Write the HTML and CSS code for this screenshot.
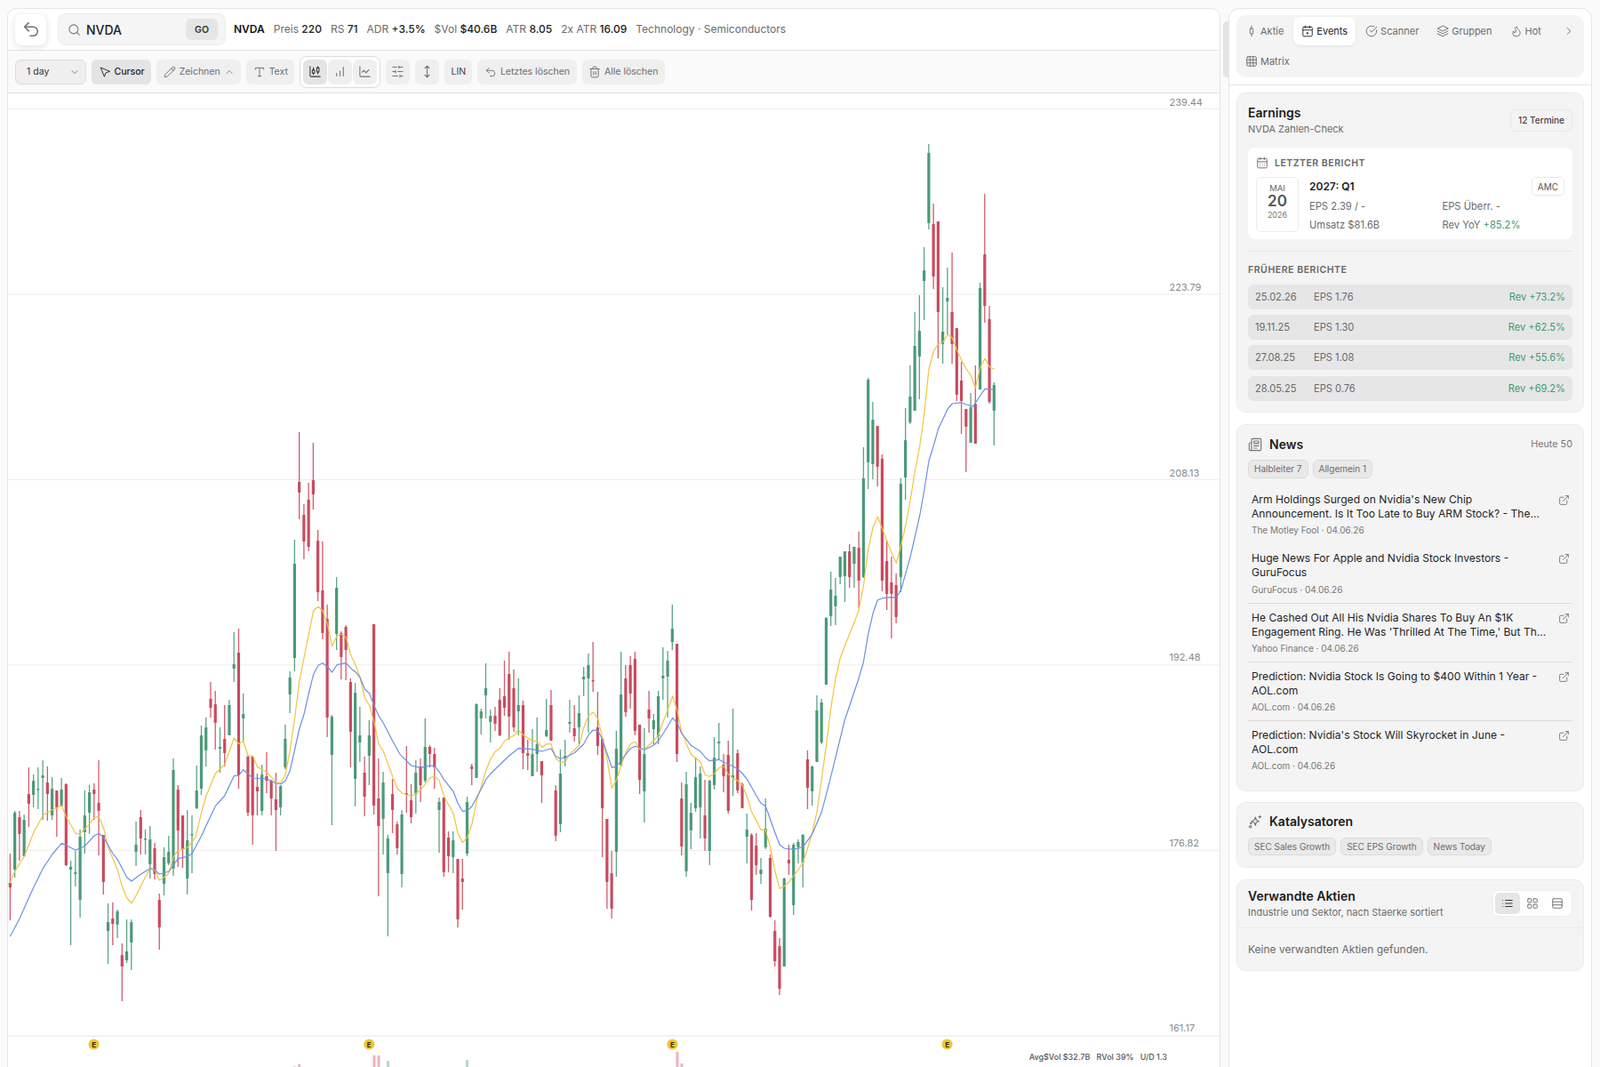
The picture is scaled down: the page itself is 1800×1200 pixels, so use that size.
FILE: index.html
```html
<!DOCTYPE html>
<html lang="de">
<head>
    <meta charset="UTF-8">
    <title>NVDA - Chart</title>
    <link rel="stylesheet" href="styles.css">
</head>
<body>
<div class="app">
    <!-- Chart -->
    <main class="chart-panel">
        <header class="ticker-bar">
            <button class="back-btn">
                <svg class="icon" width="22" height="22" viewBox="0 0 24 24"><path d="M9 14 4 9l5-5"/><path d="M4 9h10.5a5.5 5.5 0 0 1 0 11H11"/></svg>
            </button>
            <form class="search-box">
                <svg class="icon" width="15" height="15" viewBox="0 0 24 24"><circle cx="11" cy="11" r="8"/><path d="m21 21-4.3-4.3"/></svg>
                <span class="search-value">NVDA</span>
                <span class="go-btn">GO</span>
            </form>
            <div class="stats">
                <strong>NVDA</strong>
                <span>Preis <b>220</b></span>
                <span>RS <b>71</b></span>
                <span>ADR <b>+3.5%</b></span>
                <span>$Vol <b>$40.6B</b></span>
                <span>ATR <b>8.05</b></span>
                <span>2x ATR <b>16.09</b></span>
                <span>Technology · Semiconductors</span>
            </div>
        </header>

        <div class="toolbar">
            <div class="tool select-tool">1 day
                <svg class="icon" width="12" height="12" viewBox="0 0 24 24"><path d="m6 9 6 6 6-6"/></svg>
            </div>
            <button class="tool tool-active">
                <svg class="icon icon-dark" width="14" height="14" viewBox="0 0 24 24"><path d="m4 4 7.07 17 2.51-7.39L21 11.07z"/></svg>Cursor
            </button>
            <button class="tool">
                <svg class="icon" width="14" height="14" viewBox="0 0 24 24"><path d="M21.174 6.812a1 1 0 0 0-3.986-3.987L3.842 16.174a2 2 0 0 0-.5.83l-1.321 4.352a.5.5 0 0 0 .623.622l4.353-1.32a2 2 0 0 0 .83-.497z"/><path d="m15 5 4 4"/></svg>Zeichnen
                <svg class="icon" width="12" height="12" viewBox="0 0 24 24"><path d="m18 15-6-6-6 6"/></svg>
            </button>
            <button class="tool">
                <svg class="icon" width="14" height="14" viewBox="0 0 24 24"><path d="M4 7V4h16v3"/><path d="M9 20h6"/><path d="M12 4v16"/></svg>Text
            </button>
            <div class="tool-group">
                <button class="tool tool-icon tool-active">
                    <svg class="icon icon-dark" width="15" height="15" viewBox="0 0 24 24"><path d="M9 5v4"/><rect x="7" y="9" width="4" height="6" rx="1"/><path d="M9 15v2"/><path d="M17 3v2"/><rect x="15" y="5" width="4" height="8" rx="1"/><path d="M17 13v3"/><path d="M3 3v16a2 2 0 0 0 2 2h16"/></svg>
                </button>
                <button class="tool tool-icon">
                    <svg class="icon" width="15" height="15" viewBox="0 0 24 24"><path d="M18 20V4"/><path d="M12 20v-9"/><path d="M6 20v-5"/></svg>
                </button>
                <button class="tool tool-icon">
                    <svg class="icon" width="15" height="15" viewBox="0 0 24 24"><path d="M3 3v16a2 2 0 0 0 2 2h16"/><path d="m19 9-5 5-4-4-3 3"/></svg>
                </button>
            </div>
            <button class="tool tool-icon">
                <svg class="icon" width="15" height="15" viewBox="0 0 24 24"><path d="M21 4h-7M10 4H3M21 12h-9M8 12H3M21 20h-5M12 20H3M14 2v4M8 10v4M16 18v4"/></svg>
            </button>
            <button class="tool tool-icon">
                <svg class="icon" width="15" height="15" viewBox="0 0 24 24"><path d="M12 2v20"/><path d="m8 18 4 4 4-4"/><path d="m8 6 4-4 4 4"/></svg>
            </button>
            <button class="tool tool-lin">LIN</button>
            <button class="tool">
                <svg class="icon" width="14" height="14" viewBox="0 0 24 24"><path d="M9 14 4 9l5-5"/><path d="M4 9h10.5a5.5 5.5 0 0 1 0 11H11"/></svg>Letztes löschen
            </button>
            <button class="tool">
                <svg class="icon" width="14" height="14" viewBox="0 0 24 24"><path d="M3 6h18"/><path d="M19 6v14c0 1-1 2-2 2H7c-1 0-2-1-2-2V6"/><path d="M8 6V4c0-1 1-2 2-2h4c1 0 2 1 2 2v2"/><path d="M10 11v6"/><path d="M14 11v6"/></svg>Alle löschen
            </button>
        </div>

        <div class="chart-area" id="chart"></div>
    </main>

    <div class="scroll-rail"><div class="scroll-thumb"></div></div>

    <!-- Seitenleiste -->
    <aside class="side-panel">
        <nav class="tabs">
            <button class="tab">
                <svg class="icon" width="14" height="14" viewBox="0 0 24 24"><path d="M12 2v5"/><rect x="9" y="7" width="6" height="10" rx="1"/><path d="M12 17v5"/></svg>Aktie
            </button>
            <button class="tab tab-active">
                <svg class="icon" width="14" height="14" viewBox="0 0 24 24"><rect x="3" y="4" width="18" height="18" rx="2"/><path d="M16 2v4"/><path d="M8 2v4"/><path d="M3 10h18"/><path d="M11 15h2v2h-2z"/></svg>Events
            </button>
            <button class="tab">
                <svg class="icon" width="14" height="14" viewBox="0 0 24 24"><path d="M21.8 10A10 10 0 1 1 17 3.3"/><path d="m9 11 3 3L22 4"/></svg>Scanner
            </button>
            <button class="tab">
                <svg class="icon" width="14" height="14" viewBox="0 0 24 24"><path d="M12 2 2 7l10 5 10-5z"/><path d="m2 17 10 5 10-5"/><path d="m2 12 10 5 10-5"/></svg>Gruppen
            </button>
            <button class="tab">
                <svg class="icon" width="14" height="14" viewBox="0 0 24 24"><path d="M8.5 14.500A2.500 2.500 0 0 0 11 12c0-1.380-.5-2-1-3-1.070-2.140-.22-4.050 2-6 .5 2.500 2 4.900 4 6.500 2 1.600 3 3.500 3 5.500a7 7 0 1 1-14 0c0-1.150.43-2.290 1-3a2.500 2.500 0 0 0 2.500 2.500z"/></svg>Hot
            </button>
            <button class="tab tab-more">
                <svg class="icon" width="14" height="14" viewBox="0 0 24 24"><path d="m9 18 6-6-6-6"/></svg>
            </button>
            <button class="tab">
                <svg class="icon" width="14" height="14" viewBox="0 0 24 24"><rect x="3" y="3" width="18" height="18" rx="2"/><path d="M3 9h18"/><path d="M3 15h18"/><path d="M9 3v18"/><path d="M15 3v18"/></svg>Matrix
            </button>
        </nav>

        <div class="side-content">
            <!-- Earnings -->
            <section class="card earnings-card">
                <div class="card-head">
                    <div>
                        <h2>Earnings</h2>
                        <p class="card-sub">NVDA Zahlen-Check</p>
                    </div>
                    <span class="badge">12 Termine</span>
                </div>

                <div class="report">
                    <div class="report-label">
                        <svg class="icon" width="14" height="14" viewBox="0 0 24 24"><rect x="3" y="4" width="18" height="18" rx="2"/><path d="M16 2v4"/><path d="M8 2v4"/><path d="M3 10h18"/><path d="M8 14h.01M12 14h.01M16 14h.01M8 18h.01M12 18h.01M16 18h.01"/></svg>
                        LETZTER BERICHT
                    </div>
                    <div class="report-body">
                        <div class="date-box">
                            <span class="date-month">MAI</span>
                            <span class="date-day">20</span>
                            <span class="date-year">2026</span>
                        </div>
                        <div class="report-info">
                            <div class="report-title">
                                <strong>2027: Q1</strong>
                                <span class="amc">AMC</span>
                            </div>
                            <div class="report-grid">
                                <span>EPS 2.39 / -</span>
                                <span>EPS Überr. -</span>
                                <span>Umsatz $81.6B</span>
                                <span>Rev YoY <em class="up">+85.2%</em></span>
                            </div>
                        </div>
                    </div>
                </div>

                <h3 class="past-title">FRÜHERE BERICHTE</h3>
                <div class="past-row"><span class="past-date">25.02.26</span><span>EPS 1.76</span><span class="up past-rev">Rev +73.2%</span></div>
                <div class="past-row"><span class="past-date">19.11.25</span><span>EPS 1.30</span><span class="up past-rev">Rev +62.5%</span></div>
                <div class="past-row"><span class="past-date">27.08.25</span><span>EPS 1.08</span><span class="up past-rev">Rev +55.6%</span></div>
                <div class="past-row"><span class="past-date">28.05.25</span><span>EPS 0.76</span><span class="up past-rev">Rev +69.2%</span></div>
            </section>

            <!-- News -->
            <section class="card news-card">
                <div class="icon-head">
                    <svg class="icon" width="16" height="16" viewBox="0 0 24 24"><path d="M4 22h16a2 2 0 0 0 2-2V4a2 2 0 0 0-2-2H8a2 2 0 0 0-2 2v16a2 2 0 0 1-2 2Zm0 0a2 2 0 0 1-2-2v-9c0-1.1.9-2 2-2h2"/><path d="M18 14h-8"/><path d="M15 18h-5"/><path d="M10 6h8v4h-8V6Z"/></svg>
                    <h2>News</h2>
                    <span class="news-count">Heute 50</span>
                </div>
                <div class="pills">
                    <span class="pill">Halbleiter 7</span>
                    <span class="pill">Allgemein 1</span>
                </div>
                <article class="news-item news-item-plain">
                    <div>
                        <h4>Arm Holdings Surged on Nvidia's New Chip Announcement. Is It Too Late to Buy ARM Stock? - The...</h4>
                        <p>The Motley Fool · 04.06.26</p>
                    </div>
                    <svg class="icon" width="13" height="13" viewBox="0 0 24 24"><path d="M15 3h6v6"/><path d="M10 14 21 3"/><path d="M18 13v6a2 2 0 0 1-2 2H5a2 2 0 0 1-2-2V8a2 2 0 0 1 2-2h6"/></svg>
                </article>
                <article class="news-item">
                    <div>
                        <h4>Huge News For Apple and Nvidia Stock Investors - GuruFocus</h4>
                        <p>GuruFocus · 04.06.26</p>
                    </div>
                    <svg class="icon" width="13" height="13" viewBox="0 0 24 24"><path d="M15 3h6v6"/><path d="M10 14 21 3"/><path d="M18 13v6a2 2 0 0 1-2 2H5a2 2 0 0 1-2-2V8a2 2 0 0 1 2-2h6"/></svg>
                </article>
                <article class="news-item">
                    <div>
                        <h4>He Cashed Out All His Nvidia Shares To Buy An $1K Engagement Ring. He Was 'Thrilled At The Time,' But Th...</h4>
                        <p>Yahoo Finance · 04.06.26</p>
                    </div>
                    <svg class="icon" width="13" height="13" viewBox="0 0 24 24"><path d="M15 3h6v6"/><path d="M10 14 21 3"/><path d="M18 13v6a2 2 0 0 1-2 2H5a2 2 0 0 1-2-2V8a2 2 0 0 1 2-2h6"/></svg>
                </article>
                <article class="news-item">
                    <div>
                        <h4>Prediction: Nvidia Stock Is Going to $400 Within 1 Year - AOL.com</h4>
                        <p>AOL.com · 04.06.26</p>
                    </div>
                    <svg class="icon" width="13" height="13" viewBox="0 0 24 24"><path d="M15 3h6v6"/><path d="M10 14 21 3"/><path d="M18 13v6a2 2 0 0 1-2 2H5a2 2 0 0 1-2-2V8a2 2 0 0 1 2-2h6"/></svg>
                </article>
                <article class="news-item news-item-plain">
                    <div>
                        <h4>Prediction: Nvidia's Stock Will Skyrocket in June - AOL.com</h4>
                        <p>AOL.com · 04.06.26</p>
                    </div>
                    <svg class="icon" width="13" height="13" viewBox="0 0 24 24"><path d="M15 3h6v6"/><path d="M10 14 21 3"/><path d="M18 13v6a2 2 0 0 1-2 2H5a2 2 0 0 1-2-2V8a2 2 0 0 1 2-2h6"/></svg>
                </article>
            </section>

            <!-- Katalysatoren -->
            <section class="card catalyst-card">
                <div class="icon-head">
                    <svg class="icon" width="16" height="16" viewBox="0 0 24 24"><path d="M12.500 4.500l1.500 4.500 4.500 2.500-4.500 1.500-1.500 5.500-2-5-5-1.500 5-2.500z"/><path d="M20 2v4M18 4h4"/><circle cx="4" cy="20.500" r="1.800"/><circle cx="5" cy="15" r="1"/></svg>
                    <h2>Katalysatoren</h2>
                </div>
                <div class="pills">
                    <span class="pill">SEC Sales Growth</span>
                    <span class="pill">SEC EPS Growth</span>
                    <span class="pill">News Today</span>
                </div>
            </section>

            <!-- Verwandte Aktien -->
            <section class="card related-card">
                <div class="related-head">
                    <div>
                        <h2>Verwandte Aktien</h2>
                        <p class="card-sub">Industrie und Sektor, nach Staerke sortiert</p>
                    </div>
                    <div class="view-toggle">
                        <button class="view-btn view-active">
                            <svg class="icon icon-dark" width="14" height="14" viewBox="0 0 24 24"><path d="M3 6h.01M3 12h.01M3 18h.01M8 6h13M8 12h13M8 18h13"/></svg>
                        </button>
                        <button class="view-btn">
                            <svg class="icon" width="14" height="14" viewBox="0 0 24 24"><rect x="3" y="3" width="7" height="7" rx="1"/><rect x="14" y="3" width="7" height="7" rx="1"/><rect x="14" y="14" width="7" height="7" rx="1"/><rect x="3" y="14" width="7" height="7" rx="1"/></svg>
                        </button>
                        <button class="view-btn">
                            <svg class="icon" width="14" height="14" viewBox="0 0 24 24"><rect x="3" y="3" width="18" height="18" rx="2"/><path d="M3 9h18"/><path d="M3 15h18"/></svg>
                        </button>
                    </div>
                </div>
                <p class="related-empty">Keine verwandten Aktien gefunden.</p>
            </section>
        </div>
    </aside>
</div>
<script src="chart.js"></script>
</body>
</html>
```

FILE: styles.css
```css
:root {
    --border: #e5e5e5;
    --card: #f4f4f4;
    --muted: #6b6b6b;
    --text: #1c1c1c;
    --green: #3f9b73;
}

* {
    box-sizing: border-box;
}

html, body {
    height: 100%;
}

body {
    margin: 0;
    overflow: hidden;
    background: #fafafa;
    color: var(--text);
    font-family: "Inter", "Liberation Sans", sans-serif;
    font-size: 12px;
}

button {
    font: inherit;
    border: none;
    background: none;
    color: inherit;
    padding: 0;
}

h2, h3, h4, p {
    margin: 0;
}

.icon {
    flex-shrink: 0;
    fill: none;
    stroke: #737373;
    stroke-width: 1.7;
    stroke-linecap: round;
    stroke-linejoin: round;
}

.icon-dark {
    stroke: #333;
}

.app {
    display: flex;
    padding: 9px 9px 0 8px;
    height: 1300px;
}

/* Chart */
.chart-panel {
    width: 1365px;
    display: flex;
    flex-direction: column;
    background: #fff;
    border: 1px solid var(--border);
    border-radius: 10px 10px 0 0;
    overflow: hidden;
}

.ticker-bar {
    height: 47px;
    flex-shrink: 0;
    display: flex;
    align-items: center;
    padding: 0 8px;
    border-bottom: 1px solid var(--border);
}

.back-btn {
    width: 35px;
    height: 35px;
    display: flex;
    align-items: center;
    justify-content: center;
    border-radius: 8px;
    background: #fff;
    box-shadow: 0 2px 8px rgba(0,0,0,0.12);
}

.search-box {
    width: 189px;
    height: 36px;
    margin-left: 13px;
    display: flex;
    align-items: center;
    gap: 6px;
    padding: 0 8px 0 10px;
    background: #f5f5f5;
    border: 1px solid #ececec;
    border-radius: 8px;
}

.search-value {
    flex: 1;
    font-size: 14px;
    font-weight: 500;
}

.go-btn {
    width: 36px;
    height: 24px;
    display: flex;
    align-items: center;
    justify-content: center;
    border-radius: 6px;
    background: #e5e5e5;
    font-size: 10.5px;
    font-weight: 600;
    color: #333;
}

.stats {
    display: flex;
    gap: 10px;
    margin: 0 0 1px 9px;
    font-size: 12px;
    color: var(--muted);
    white-space: nowrap;
}

.stats strong {
    color: #111;
    font-weight: 600;
}

.stats b {
    color: #222;
    font-weight: 500;
}

.toolbar {
    height: 48px;
    flex-shrink: 0;
    display: flex;
    align-items: center;
    padding: 0 8px;
    gap: 6px;
    background: #fafafa;
    border-bottom: 1px solid #e2e2e2;
}

.tool {
    height: 28px;
    display: flex;
    align-items: center;
    gap: 4px;
    padding: 0 7.500px;
    border-radius: 6px;
    background: #efefef;
    font-size: 10.5px;
    font-weight: 400;
    color: #6b6b6b;
    white-space: nowrap;
}

.tool-active {
    background: #e4e4e4;
    color: #222;
    font-weight: 500;
}

.select-tool {
    width: 80px;
    justify-content: space-between;
    padding: 0 6px 0 12px;
    border: 1px solid #dedede;
    color: #333;
}

.tool-group {
    display: flex;
    gap: 1px;
    padding: 3px;
    background: #fff;
    border: 1px solid #dcdcdc;
    border-radius: 8px;
}

.tool-icon {
    width: 27px;
    justify-content: center;
    padding: 0;
}

.tool-lin {
    width: 31px;
    justify-content: center;
    padding: 0;
    color: #444;
}

.chart-area {
    flex: 1;
    position: relative;
}

.chart-area svg {
    display: block;
}

.scroll-rail {
    width: 9px;
    flex-shrink: 0;
    padding: 15px 0 0 3px;
}

.scroll-thumb {
    width: 9px;
    height: 63px;
    border-radius: 5px;
    background: #e4e4e4;
}

/* Seitenleiste */
.side-panel {
    width: 409px;
    background: #fff;
    border: 1px solid var(--border);
    border-radius: 12px 12px 0 0;
}

.tabs {
    display: flex;
    flex-wrap: wrap;
    gap: 2px;
    margin: 7px 8px 0;
    padding: 2px 1px;
    height: 70px;
    background: var(--card);
    border-radius: 10px;
}

.tab {
    height: 32px;
    display: flex;
    align-items: center;
    gap: 3px;
    padding: 0 9px;
    border-radius: 8px;
    font-size: 11px;
    font-weight: 400;
    color: #6b6b6b;
}

.tab-active {
    background: #fff;
    color: #222;
    box-shadow: 0 1px 3px rgba(0,0,0,0.08);
}

.tab-active .icon {
    stroke: #333;
}

.tab-more {
    width: 32px;
    margin-left: auto;
    justify-content: center;
    padding: 0;
}

.side-content {
    display: flex;
    flex-direction: column;
    gap: 12.500px;
    margin-top: 8px;
    padding: 8px 8px 0;
    border-top: 1px solid var(--border);
}

.card {
    background: var(--card);
    border: 1px solid #ebebeb;
    border-radius: 10px;
    padding: 10px 12px;
}

.card h2 {
    font-size: 14px;
    font-weight: 600;
    line-height: 20px;
    color: #1c1c1c;
}

.card-sub {
    font-size: 11px;
    line-height: 16px;
    color: var(--muted);
}

.up {
    color: var(--green);
    font-style: normal;
}

/* Earnings */
.earnings-card {
    height: 360px;
    padding-top: 12px;
}

.card-head {
    display: flex;
    justify-content: space-between;
    align-items: center;
}

.badge {
    height: 25px;
    padding: 0 8px;
    display: flex;
    align-items: center;
    border: 1px solid #e8e8e8;
    border-radius: 6px;
    font-size: 10px;
    font-weight: 500;
    color: #444;
}

.report {
    height: 103px;
    margin-top: 13px;
    padding: 10px 9px;
    background: #fff;
    border-radius: 8px;
}

.report-label {
    display: flex;
    align-items: center;
    gap: 7px;
    height: 14px;
    font-size: 10.5px;
    font-weight: 600;
    letter-spacing: 0.5px;
    color: #666;
}

.report-body {
    display: flex;
    gap: 12px;
    margin-top: 9px;
}

.date-box {
    width: 48px;
    height: 62px;
    flex-shrink: 0;
    display: flex;
    flex-direction: column;
    align-items: center;
    padding-top: 6px;
    border: 1px solid #ececec;
    border-radius: 6px;
}

.date-month {
    font-size: 9.5px;
    line-height: 11px;
    color: #666;
}

.date-day {
    font-size: 17px;
    line-height: 19px;
    font-weight: 600;
    color: #555;
}

.date-year {
    font-size: 9px;
    line-height: 12px;
    color: #777;
}

.report-info {
    flex: 1;
}

.report-title {
    display: flex;
    justify-content: space-between;
    align-items: flex-start;
    height: 22.500px;
}

.report-title strong {
    font-size: 12px;
    line-height: 21px;
    font-weight: 600;
}

.amc {
    height: 21px;
    padding: 0 6px;
    display: flex;
    align-items: center;
    border: 1px solid #e8e8e8;
    border-radius: 5px;
    font-size: 10px;
    color: #555;
}

.report-grid {
    display: grid;
    grid-template-columns: 149.500px 1fr;
    grid-auto-rows: 21px;
    align-items: center;
    font-size: 11.200px;
    color: var(--muted);
}

.past-title {
    margin-top: 13px;
    padding-top: 14px;
    border-top: 1px solid #e6e6e6;
    font-size: 10.5px;
    line-height: 14px;
    font-weight: 600;
    letter-spacing: 0.55px;
    color: #666;
}

.past-row {
    height: 28px;
    margin-top: 6.400px;
    display: flex;
    align-items: center;
    padding: 0 8px;
    background: #e6e6e6;
    border-radius: 6px;
    font-size: 11.100px;
    color: #6a6a6a;
}

.past-title + .past-row {
    margin-top: 8.500px;
}

.past-date {
    width: 66px;
}

.past-rev {
    margin-left: auto;
}

/* News */
.icon-head {
    display: flex;
    align-items: center;
    height: 24px;
}

.icon-head h2 {
    margin-left: 8px;
}

.news-count {
    margin-left: auto;
    font-size: 10.800px;
    color: #777;
}

.pills {
    display: flex;
    gap: 5px;
    margin-top: 5.500px;
}

.pill {
    height: 20.500px;
    display: flex;
    align-items: center;
    padding: 0 6px;
    background: #e9e9e9;
    border: 1px solid #dcdcdc;
    border-radius: 6px;
    font-size: 10px;
    color: #6b6b6b;
}

.news-item {
    display: flex;
    justify-content: space-between;
    gap: 8px;
    padding: 8px 3px 8px 4px;
    border-bottom: 1px solid #dcdcdc;
}

.news-item-plain {
    border-bottom: 1px solid transparent;
}

.pills + .news-item {
    margin-top: 8.500px;
}

.news-item h4 {
    font-size: 12.100px;
    line-height: 16px;
    font-weight: 400;
    color: #1f1f1f;
}

.news-item p {
    margin-top: 3.300px;
    font-size: 10px;
    line-height: 14px;
    color: #777;
}

.news-item .icon {
    margin-top: 2px;
}

.news-card {
    height: 413px;
}

/* Katalysatoren */
.catalyst-card {
    height: 74px;
    padding-top: 9px;
}

/* Verwandte Aktien */
.related-card {
    height: 103px;
    padding: 0;
}

.related-head {
    height: 54px;
    display: flex;
    justify-content: space-between;
    align-items: center;
    padding: 0 12px;
    border-bottom: 1px solid #ebebeb;
}

.view-toggle {
    display: flex;
    padding: 2px;
    background: #fff;
    border: 1px solid #eee;
    border-radius: 7px;
}

.view-btn {
    width: 28px;
    height: 24px;
    display: flex;
    align-items: center;
    justify-content: center;
    border-radius: 5px;
}

.view-active {
    background: #e5e5e5;
}

.related-empty {
    padding: 16px 12px;
    font-size: 12px;
    line-height: 16px;
    color: #6b6b6b;
}
```

FILE: chart.js
```js
// Kerzen: Farbe, Hoch, Koerper oben, Koerper unten, Tief (Bildschirm-y)
const candles = [
    ['r',960,993,998,1035],['g',912,914,978,987],['r',912,919,938,968],['g',916,922,963,963],['r',863,893,904,930],
    ['g',871,878,894,908],['g',863,887,888,910],['g',855,872,875,922],['r',862,880,893,923],['g',874,887,917,922],
    ['r',889,889,908,941],['g',875,888,907,907],['r',881,882,973,974],['g',968,975,978,1063],['g',957,981,983,997],
    ['g',933,941,1012,1032],['g',889,917,936,960],['g',883,891,914,938],['r',881,888,893,922],['r',855,903,912,962],
    ['r',939,939,992,1006],['g',1016,1037,1047,1084],['r',1015,1033,1039,1063],['g',1023,1025,1040,1055],['r',1061,1074,1087,1126],
    ['g',1034,1070,1080,1083],['g',1034,1037,1060,1091],['g',924,950,958,974],['r',911,919,943,961],['g',933,943,944,961],
    ['g',929,944,972,988],['r',948,954,983,989],['r',1005,1012,1043,1068],['g',953,964,994,1007],['g',940,958,971,973],
    ['g',853,866,977,985],['r',883,888,934,975],['r',917,917,955,976],['g',911,945,988,1006],['g',917,938,939,982],
    ['g',861,889,909,910],['g',816,827,887,894],['g',807,818,844,862],['r',767,786,796,807],['r',777,792,813,843],
    ['g',818,840,842,869],['r',793,831,847,862],['g',787,793,827,827],['g',711,747,752,767],['r',707,734,872,887],
    ['g',780,803,808,833],['r',850,851,914,918],['r',850,851,917,950],['r',870,885,890,917],['g',860,871,912,917],
    ['r',846,873,878,892],['r',877,878,898,917],['r',869,899,911,957],['g',883,884,908,917],['g',815,831,863,865],
    ['g',755,762,781,802],['g',607,634,740,755],['r',486,542,554,584],['r',567,579,609,629],['r',543,562,615,620],
    ['r',498,540,556,573],['r',596,608,666,676],['r',609,664,712,719],['r',680,696,807,829],['g',804,806,849,928],
    ['g',649,661,713,731],['r',710,712,739,764],['r',703,705,731,765],['r',763,767,823,863],['g',768,779,876,907],
    ['g',795,827,835,857],['r',851,869,896,918],['g',810,827,850,883],['r',702,702,906,916],['r',853,898,929,1008],
    ['g',868,880,921,961],['g',939,943,982,1053],['r',876,893,911,937],['r',924,927,954,961],['g',911,916,983,998],
    ['r',839,892,894,914],['r',882,900,919,926],['g',855,869,893,915],['r',853,862,883,902],['g',808,840,878,880],
    ['r',838,840,848,863],['r',841,848,863,887],['g',897,902,911,959],['r',897,897,981,986],['r',935,942,963,981],
    ['g',935,945,964,982],['r',966,966,1034,1043],['r',966,988,992,1023],['g',896,902,960,963],['r',859,862,865,883],
    ['g',791,792,875,875],['g',797,800,808,826],['g',746,774,782,808],['g',798,805,812,835],['r',795,805,814,822],
    ['r',774,787,827,828],['r',743,783,796,805],['r',733,758,806,832],['r',753,774,818,823],['g',763,793,800,827],
    ['r',788,793,847,865],['r',832,847,850,866],['g',820,848,873,873],['g',807,837,848,868],['r',856,856,872,903],
    ['g',786,821,828,829],['r',776,793,833,833],['r',883,889,940,946],['g',843,870,927,936],['g',832,850,853,862],
    ['g',787,812,814,824],['r',793,819,828,834],['g',782,802,818,837],['g',750,761,764,783],['g',735,748,763,824],
    ['r',722,765,766,778],['r',778,818,839,849],['r',830,831,909,964],['r',921,921,992,1022],['r',957,982,1022,1033],
    ['g',822,842,958,986],['g',733,781,861,862],['r',748,763,801,806],['r',738,748,780,797],['r',733,741,822,827],
    ['r',815,815,877,893],['g',819,848,890,925],['r',777,798,808,824],['g',803,810,820,837],['g',777,783,828,837],
    ['g',728,760,763,787],['g',732,743,761,807],['g',680,707,722,731],['r',724,724,848,857],['r',880,898,952,962],
    ['g',868,882,980,986],['g',903,914,934,955],['g',852,874,909,913],['g',862,870,908,943],['r',877,917,943,957],
    ['g',877,878,957,973],['g',829,852,883,888],['g',813,834,836,855],['r',848,860,873,891],['r',833,849,912,915],
    ['g',797,872,875,895],['r',843,847,889,892],['r',880,882,909,909],['g',915,933,941,971],['r',937,939,1012,1024],
    ['r',937,951,973,984],['g',965,978,983,994],['g',898,932,953,955],['r',961,965,1031,1032],['r',1035,1047,1081,1087],
    ['r',1055,1064,1112,1119],['g',987,988,1087,1087],['r',950,967,971,984],['g',948,950,1018,1029],['g',944,947,953,971],
    ['g',938,939,970,998],['r',844,854,886,910],['g',861,862,890,906],['g',782,799,857,857],['g',786,790,835,837],
    ['g',694,695,770,770],['g',643,663,693,704],['g',650,670,682,703],['g',626,626,649,657],['g',620,620,648,677],
    ['r',612,620,649,661],['g',615,615,634,661],['r',598,616,653,684],['g',503,538,649,650],['g',425,427,520,550],
    ['g',452,472,522,539],['r',479,479,525,547],['r',511,516,653,665],['r',608,631,668,686],['r',626,655,668,718],
    ['r',645,658,694,701],['g',538,544,649,666],['g',459,495,537,562],['g',411,446,475,477],['g',351,389,462,462],
    ['g',332,372,401,449],['g',278,304,316,360],['g',162,172,251,258],['r',229,252,311,325],['r',249,249,351,403],
    ['g',323,373,387,409],['g',301,335,339,377],['r',284,351,387,409],['r',369,369,444,451],['r',407,428,451,488],
    ['r',460,460,480,531],['g',442,458,498,498],['r',411,454,499,499],['g',318,324,438,438],['r',218,286,344,363],
    ['r',344,359,452,454],['g',430,433,462,501]
];

// Gleitende Durchschnitte als x,y-Paare
const maFast = [
    11.3,992.7, 16.7,980, 27.3,963.3, 37.7,936.7, 48.3,916.7, 58.7,910.7, 69.3,906, 74.3,918.3, 85,937.3, 90,937.7,
    100.7,926.7, 106,919.3, 111.3,918.7, 116.7,931.7, 121.7,953.3, 132.3,978.3, 137.3,996.7, 142.7,1010, 148,1015.7,
    153.3,1006.7, 163.3,986.7, 169,976.7, 174,978.3, 179.3,990, 184.7,986.7, 190,981.7, 195.3,963.3, 200.3,956.7,
    210.7,953.3, 220,941.7, 226.7,913.3, 232,895, 242.3,870, 252.7,860, 263.3,830, 268.7,836.7, 273.7,833.3, 279,850,
    284.3,850, 289.7,862.7, 300,868.3, 310.7,880, 316,880, 321,871.7, 326.3,843.3, 331.7,806.7, 336.7,766.7, 342,740,
    347.3,713.3, 352.7,686.7, 358,682.3, 363,686.7, 368.3,701.7, 373.7,726.7, 379,715, 384,713.3, 389.3,716.7,
    394.7,736.7, 400,748.3, 405,761.7, 410.3,785, 415.7,793.3, 420.7,811.7, 426,836.7, 431.3,845, 441.7,873.3,
    447,886.7, 452.3,891.7, 462.7,895.7, 473.3,888.3, 483.7,875, 489,872.7, 494.3,878.3, 499.3,895, 510,915, 515,936.7,
    520.3,947.7, 525.7,941.7, 531,926.7, 536.3,900, 541.7,883.3, 546.7,866.7, 552,853.3, 557.3,845, 562.3,841.7,
    567.7,833.3, 572.7,830, 578,827.3, 583.3,821, 588.7,826.7, 599,833.3, 604.3,833.3, 609.7,840.7, 615,836.7, 620,836.7,
    625.3,853.3, 630.7,857.3, 636,856.7, 641,848.3, 651.7,838.3, 656.7,818.3, 662,805, 667.3,801, 672.7,808.3, 677.7,830,
    683,853.3, 688.3,886.7, 693.7,876.7, 699,860, 704,846.7, 709.3,836.7, 714.7,834.3, 719.7,842.7, 725,842.7, 735.3,833.3,
    740.7,826.7, 746,811.7, 751.3,798.3, 756.7,782.7, 762,800, 767,823.3, 772.3,836.7, 777.3,848.3, 788,856.7, 793.3,871.7,
    798.3,873.3, 803.7,870, 809,863.3, 814.3,861.7, 819.3,870.7, 824.7,875, 830,878.3, 835.3,883.3, 840.7,896.7, 845.7,913.3,
    851,923.3, 856,933.3, 861.3,933.3, 866.7,953.3, 872,980, 877,999.3, 882.3,996.7, 887.7,991.7, 892.7,985, 898,978.3,
    903.3,970, 908.7,953.3, 913.7,936.7, 919,913.3, 924.3,876.7, 929.7,836.7, 934.7,796.7, 940,763.3, 945.3,740, 950.3,726.7,
    961,700, 966,686.7, 971.3,660, 976.7,618, 982,593.3, 987.3,581, 992.7,595, 997.7,608.3, 1003,621.7, 1008.3,633.3,
    1013.7,613.3, 1019,590, 1024,563.3, 1029.3,530, 1034.7,502, 1040,463.3, 1045,415, 1050.3,395, 1055.7,386.7, 1060.7,385,
    1066,376, 1071.3,380, 1076.3,393.3, 1081.7,405, 1087,415, 1092,421.7, 1097.3,436.7, 1102.7,413.3, 1108,403.3,
    1113.3,412.7, 1118.7,415.3
];

const maSlow = [
    11.3,1053.3, 22,1033.3, 32.3,1010, 37.7,998.3, 48.3,976.7, 58.7,961, 69.3,948.3, 85,956, 95.3,951.7, 106,940, 111.3,937.3,
    116.7,941.7, 127,960, 132.3,966.7, 142.7,986.7, 148,991, 158.3,983.3, 169,976.7, 174,978.3, 179.3,983.3, 190,980,
    200.3,965.7, 210.7,963.3, 216,960, 226.7,940, 232,928.3, 242.3,906.7, 252.7,895, 263.3,872.7, 268.7,872, 273.7,865.7,
    284.3,875, 300,876, 310.7,881, 316,881.7, 321,878.3, 326.3,866.7, 336.7,820, 342,803.3, 347.3,780, 352.7,758.3, 358,748.3,
    363,745.7, 368.3,750, 373.7,756, 379,747.7, 389.3,745.7, 394.7,751.7, 400,755.7, 405,761.7, 410.3,775, 415.7,780,
    420.7,793.3, 426,805, 431.3,813.3, 441.7,833.3, 450,848.3, 462.7,861, 473.3,863.3, 483.7,861, 489,861.7, 494.3,868.3,
    499.3,876.7, 510,890, 515,903.3, 520.3,912.3, 525.7,911.7, 531,906.7, 541.7,886.7, 546.7,876.7, 552,870, 562.3,860,
    572.7,850, 583.3,841.7, 599,842.7, 609.7,845, 620,841.7, 625.3,850.7, 630.7,853.3, 636,851.7, 646.3,846.7, 656.7,836.7,
    662,826.7, 667.3,821, 672.7,821.7, 677.7,831.7, 688.3,863.3, 693.7,861.7, 699,855, 709.3,841.7, 714.7,839.3, 725,843.3,
    735.3,838.3, 740.7,833.3, 751.3,816.7, 756.7,807.3, 762,813.3, 767,825, 772.3,831.7, 777.3,838.3, 788,845, 793.3,851.7,
    798.3,855.7, 809,854.3, 814.3,857.3, 824.7,861.7, 830,865, 835.3,870, 840.7,876.7, 851,895, 856,903.3, 861.3,906.7,
    872,936.7, 877,950, 882.3,954, 887.7,955, 898,954.3, 903.3,952.3, 913.7,938.3, 924.3,913.3, 934.7,873.3, 950.3,810,
    966,763.3, 971.3,745, 976.7,713.3, 982,690, 987.3,675, 992.7,672.7, 1003,671.7, 1008.3,672.3, 1013.7,663.3, 1024,626.7,
    1034.7,580, 1040,550, 1045,518.3, 1050.7,500, 1055.7,481.7, 1060.7,471.7, 1066,460, 1071.3,454, 1081.7,452.7, 1087,455,
    1094.7,457.3, 1102.7,445, 1108,437.3, 1118.7,438.3
];

const priceLabels = [[239.44,115],[223.79,323],[208.13,531.5],[192.48,739],[176.82,947.5],[161.17,1156]];
const gridLines = [122.3,330.8,539.3,747.8,956.3];
const earnings = [105.6,415.3,756.5,1065.6];
const volume = [
    [331.7,1199,'#dcdcdc'],[336.7,1197,'#eab4bd'],[421,1187,'#eab4bd'],[426,1187,'#eab4bd'],
    [436.6,1193,'#b3d8c8'],[525.5,1192,'#b3d8c8'],[762,1183,'#eab4bd'],[767,1196,'#eab4bd']
];

const COLORS = { g: '#4a9a78', r: '#c94b5e' };
const X0 = 11.4, STEP = 5.246;

function renderChart() {
    let out = '';

    gridLines.forEach(y => {
        out += `<line x1="9" x2="1373" y1="${y}" y2="${y}" stroke="#eeeeee"/>`;
    });
    out += '<rect x="9" y="1164" width="1364" height="2" fill="#f3f3f3"/>';

    volume.forEach(([x, top, color]) => {
        out += `<rect x="${x - 1.5}" y="${top}" width="3" height="${1200 - top}" fill="${color}"/>`;
    });

    candles.forEach(([c, high, top, bottom, low], i) => {
        const x = X0 + i * STEP;
        out += `<line x1="${x}" x2="${x}" y1="${high}" y2="${low}" stroke="${COLORS[c]}" stroke-width="1.3" opacity="0.9"/>`;
        out += `<rect x="${x - 1.6}" y="${top}" width="3.2" height="${Math.max(bottom - top, 1.5)}" rx="0.4" fill="${COLORS[c]}"/>`;
    });

    [[maFast, '#efc53f'], [maSlow, '#6c90e4']].forEach(([pts, color]) => {
        out += `<polyline points="${pts.join(' ')}" fill="none" stroke="${color}" stroke-width="1.2" stroke-linejoin="round"/>`;
    });

    priceLabels.forEach(([price, y]) => {
        out += `<text x="1315.5" y="${y + 4}" font-size="11" fill="#8a8a8a">${price.toFixed(2)}</text>`;
    });

    earnings.forEach(x => {
        out += `<circle cx="${x}" cy="1174.5" r="6" fill="#eec535"/>`;
        out += `<text x="${x}" y="1177.500" text-anchor="middle" font-size="8" font-weight="700" fill="#3a2c00">E</text>`;
    });

    out += '<text x="1313" y="1192" text-anchor="end" font-size="9" font-weight="500" fill="#555">Avg$Vol $32.7B&#160;&#160;&#160;RVol 39%&#160;&#160;&#160;U/D 1.3</text>';

    document.getElementById('chart').innerHTML =
        `<svg width="1363" height="1095" viewBox="9 105 1363 1095">${out}</svg>`;
}

renderChart();
```
